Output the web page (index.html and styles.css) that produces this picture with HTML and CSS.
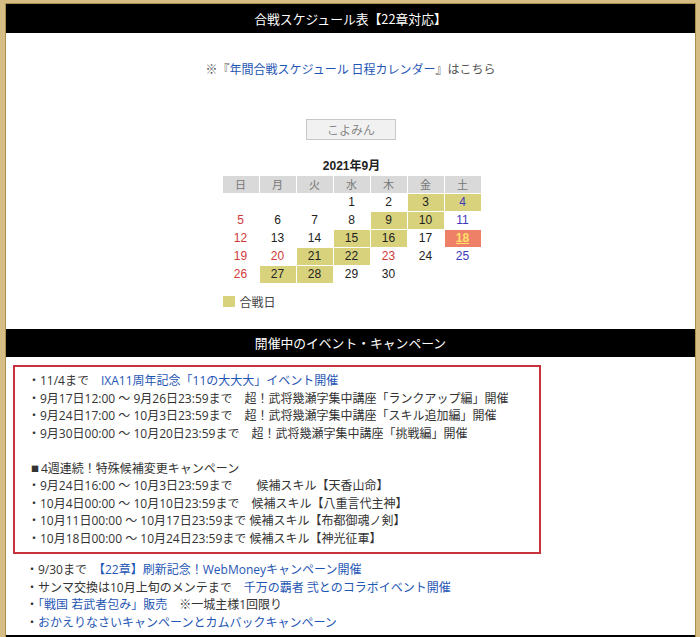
FILE: index.html
```html
<!DOCTYPE html>
<html lang="ja">
<head>
<meta charset="utf-8">
<link rel="stylesheet" href="styles.css">
</head>
<body>
<div class="page">
  <div class="bar">合戦スケジュール表【22章対応】</div>
  <p class="intro">※『<a href="#">年間合戦スケジュール 日程カレンダー</a>』はこちら</p>
  <div class="btnrow"><button class="btn">こよみん</button></div>
  <div class="cal">
    <div class="caltitle">2021年9月</div>
    <table class="grid">
      <tr class="head"><th>日</th><th>月</th><th>火</th><th>水</th><th>木</th><th>金</th><th>土</th></tr>
      <tr><td></td><td></td><td></td><td>1</td><td>2</td><td class="b">3</td><td class="b sat">4</td></tr>
      <tr><td class="sun">5</td><td>6</td><td>7</td><td>8</td><td class="b">9</td><td class="b">10</td><td class="sat">11</td></tr>
      <tr><td class="sun">12</td><td>13</td><td>14</td><td class="b">15</td><td class="b">16</td><td>17</td><td class="today"><span>18</span></td></tr>
      <tr><td class="sun">19</td><td class="sun">20</td><td class="b">21</td><td class="b">22</td><td class="sun">23</td><td>24</td><td class="sat">25</td></tr>
      <tr><td class="sun">26</td><td class="b">27</td><td class="b">28</td><td>29</td><td>30</td><td></td><td></td></tr>
    </table>
    <div class="legend"><span class="swatch"></span>合戦日</div>
  </div>
  <div class="bar bar2">開催中のイベント・キャンペーン</div>
  <div class="box">
    <ul class="list">
      <li>・11/4まで　<a href="#">IXA11周年記念「11の大大大」イベント開催</a></li>
      <li>・9月17日12:00 ～ 9月26日23:59まで　超！武将幾瀬字集中講座「ランクアップ編」開催</li>
      <li>・9月24日17:00 ～ 10月3日23:59まで　超！武将幾瀬字集中講座「スキル追加編」開催</li>
      <li>・9月30日00:00 ～ 10月20日23:59まで　超！武将幾瀬字集中講座「挑戦編」開催</li>
      <li class="blank"></li>
      <li><span class="sq">■</span>4週連続！特殊候補変更キャンペーン</li>
      <li>・9月24日16:00 ～ 10月3日23:59まで　　候補スキル【天香山命】</li>
      <li>・10月4日00:00 ～ 10月10日23:59まで　候補スキル【八重言代主神】</li>
      <li>・10月11日00:00 ～ 10月17日23:59まで 候補スキル【布都御魂ノ剣】</li>
      <li>・10月18日00:00 ～ 10月24日23:59まで 候補スキル【神光征軍】</li>
    </ul>
  </div>
  <ul class="list after">
    <li>・9/30まで　<a href="#">【22章】刷新記念！WebMoneyキャンペーン開催</a></li>
    <li>・サンマ交換は10月上旬のメンテまで　<a href="#">千万の覇者 弐とのコラボイベント開催</a></li>
    <li>・<a href="#">「戦国 若武者包み」販売</a>　※一城主様1回限り</li>
    <li>・<a href="#">おかえりなさいキャンペーンとカムバックキャンペーン</a></li>
  </ul>
  <div class="bar bar3"></div>
</div>
</body>
</html>
```

FILE: styles.css
```css
html, body {
  margin: 0;
  padding: 0;
}
body {
  background: #d6bd84;
  width: 700px;
  height: 637px;
  overflow: hidden;
  font-family: "Open Sans", "Noto Sans CJK JP", sans-serif;
  color: #333;
}
.page {
  margin: 4px 5px 0 6px;
  background: #fff;
  box-shadow: 0 0 0 1px #a8904f;
  height: 700px;
}
a {
  color: #1f56b4;
  text-decoration: none;
}
.bar {
  background: #000;
  color: #fff;
  text-align: center;
  height: 29px;
  line-height: 29px;
  font-size: 12.8px;
  font-family: "Noto Sans CJK JP", sans-serif;
}
.intro {
  margin: 27px 0 0;
  text-align: center;
  font-size: 12px;
  line-height: 18px;
  font-family: "Noto Sans CJK JP", sans-serif;
  color: #555;
}
.btnrow {
  display: flex;
  justify-content: center;
  margin-top: 41px;
  padding-left: 1px;
}
.btn {
  width: 90px;
  height: 21px;
  background: #f1f1f1;
  border: 1px solid #c8c8c8;
  color: #888;
  font-size: 12px;
  font-family: "Noto Sans CJK JP", sans-serif;
  padding: 0;
}
.cal {
  display: flex;
  flex-direction: column;
  align-items: center;
  margin-top: 18px;
  padding-left: 2px;
}
.caltitle {
  font-family: "Liberation Sans", "Noto Sans CJK JP", sans-serif;
  font-weight: bold;
  font-size: 12px;
  color: #222;
  line-height: 16px;
  height: 17px;
}
.grid {
  border-collapse: separate;
  border-spacing: 1px;
  font-family: "Liberation Sans", "Noto Sans CJK JP", sans-serif;
  font-size: 12px;
  color: #222;
}
.grid th, .grid td {
  width: 36px;
  height: 17px;
  padding: 0;
  text-align: center;
  line-height: 17px;
}
.grid th {
  background: #d9d9d9;
  color: #777;
  font-weight: normal;
  font-family: "Noto Sans CJK JP", sans-serif;
  font-size: 11px;
}
.grid td.b {
  background: #d9d27d;
}
.grid td.sun {
  color: #d23a3a;
}
.grid td.sat {
  color: #3b3bbd;
}
.grid td.today {
  background: #ee8068;
}
.grid td.today span {
  color: #ffe06a;
  font-weight: bold;
  text-decoration: underline;
}
.legend {
  align-self: stretch;
  width: 260px;
  margin: 10px auto 0;
  padding-left: 2px;
  display: flex;
  align-items: center;
  gap: 5px;
  font-size: 12px;
  font-family: "Noto Sans CJK JP", sans-serif;
  color: #444;
  height: 14px;
}
.swatch {
  width: 12px;
  height: 11px;
  background: #d9d27d;
}
.bar2 {
  margin-top: 21px;
  height: 28px;
  line-height: 28px;
}
.box {
  margin: 8px 0 0 7px;
  width: 524px;
  border: 2px solid #c8323c;
  padding: 5px 0 5px;
}
.list {
  list-style: none;
  margin: 0;
  padding: 0 0 0 13px;
  font-size: 12px;
  line-height: 17.5px;
}
.list li {
  white-space: nowrap;
  height: 17.5px;
}
.sq {
  display: inline-block;
  width: 10px;
  padding-left: 3px;
  font-size: 8px;
  vertical-align: 1px;
}
.after {
  margin-top: 7px;
  padding-left: 20px;
}
.bar3 {
  margin-top: 4px;
}
```
